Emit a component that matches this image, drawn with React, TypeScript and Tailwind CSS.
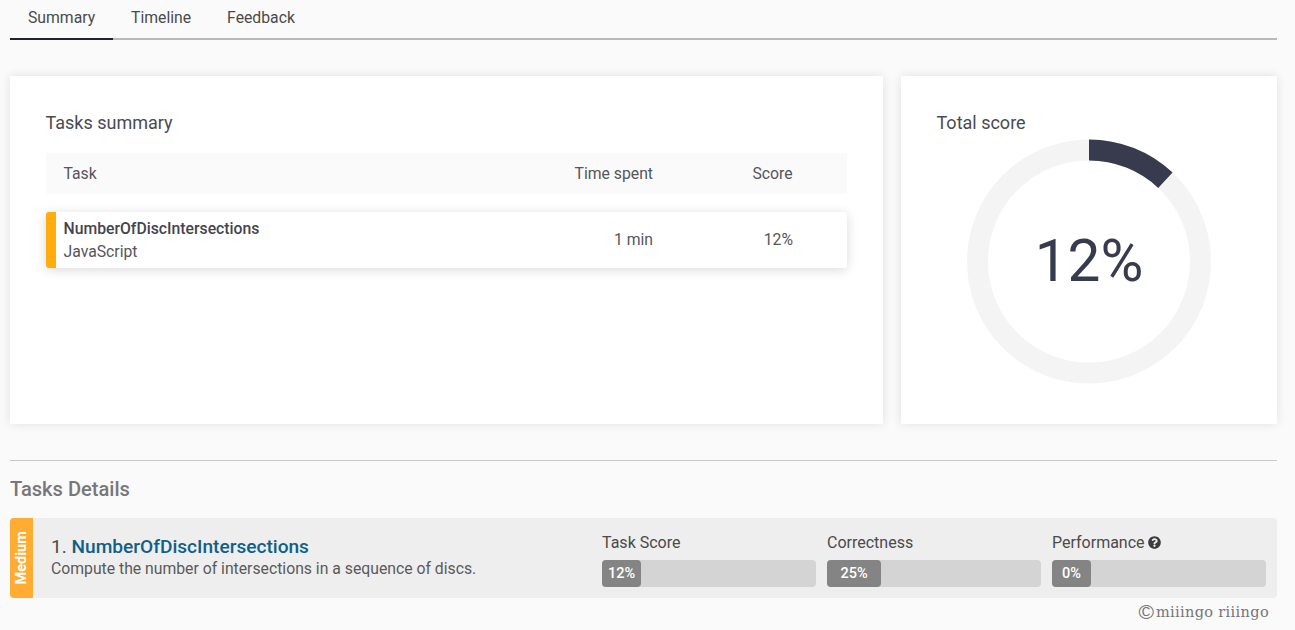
import React from "react";
import { FaQuestionCircle } from "react-icons/fa";

const font = { fontFamily: "Roboto, sans-serif" };

function ScoreRing({ value }: { value: number }) {
  const r = 111.5;
  const circumference = 2 * Math.PI * r;
  return (
    <svg width="244" height="245" viewBox="0 0 244 245" className="block">
      <circle cx="122" cy="122.5" r={r} fill="none" stroke="#f4f4f4" strokeWidth="21" />
      <circle
        cx="122"
        cy="122.5"
        r={r}
        fill="none"
        stroke="#373b4d"
        strokeWidth="21"
        strokeDasharray={`${circumference * value} ${circumference}`}
        transform="rotate(-90 122 122.5)"
      />
    </svg>
  );
}

function Meter({ label, value, fill, help }: { label: string; value: string; fill: number; help?: boolean }) {
  return (
    <div className="w-[214px] flex flex-col">
      <div className="h-[20px] pt-[1px] flex items-center gap-[3px] text-[16px] leading-[20px] text-[#4a4a4a]">
        {label}
        {help && <FaQuestionCircle className="w-[13px] h-[13px] text-[#3c3c3c]" />}
      </div>
      <div className="mt-[8px] h-[27px] rounded-[4px] bg-[#d4d4d4]">
        <div
          className="h-full rounded-[4px] bg-[#848484] flex items-center justify-center text-[14.5px] font-medium text-white"
          style={{ width: fill }}
        >
          {value}
        </div>
      </div>
    </div>
  );
}

export default function App() {
  return (
    <div className="h-[630px] overflow-hidden bg-[#fafafa] pl-[10px] pr-[18px]" style={font}>
      {/* Tabs */}
      <div className="h-[40px] flex border-b-2 border-[#b9b9b9] text-[15.75px] text-[#4a4a4a]">
        <div className="w-[103px] h-[40px] border-b-2 border-[#23232b] pt-[8px] pl-[18px] leading-[20px]">Summary</div>
        <div className="pt-[8px] pl-[18px] leading-[20px]">Timeline</div>
        <div className="pt-[8px] pl-[36px] leading-[20px]">Feedback</div>
      </div>

      <div className="mt-[36px] flex gap-[18px]">
        {/* Tasks summary */}
        <div className="w-[873px] h-[348px] bg-white shadow-[0_0_10px_rgba(0,0,0,0.1)] pt-[36px] px-[36px]">
          <h2 className="text-[18px] leading-[22px] text-[#4a4a50] -ml-[0.5px]">Tasks summary</h2>
          <div className="mt-[19px] h-[41px] bg-[#fafafa] flex items-center text-[15.75px] text-[#55555c]">
            <div className="flex-1 pl-[17.5px]">Task</div>
            <div className="w-[100px] text-right">Time spent</div>
            <div className="w-[194px] pr-[54.5px] text-right">Score</div>
          </div>
          <div className="mt-[18px] h-[56px] bg-white rounded-[3px] shadow-[0_2px_12px_rgba(0,0,0,0.15)] border-l-[10px] border-[#ffac0e] flex items-center text-[#55555c]">
            <div className="flex-1 pl-[7.5px]">
              <div className="text-[15.75px] leading-[23px] font-medium text-[#45454c]">NumberOfDiscIntersections</div>
              <div className="text-[15.75px] leading-[23px]">JavaScript</div>
            </div>
            <div className="w-[100px] text-right text-[15.75px]">1 min</div>
            <div className="w-[194px] pr-[54px] text-right text-[15.75px]">12%</div>
          </div>
        </div>

        {/* Total score */}
        <div className="w-[376px] h-[348px] bg-white shadow-[0_0_10px_rgba(0,0,0,0.1)] pt-[36px] px-[36px]">
          <h2 className="text-[18px] leading-[22px] text-[#4a4a50] -ml-[0.5px]">Total score</h2>
          <div className="mt-[5px] ml-[30px] w-[244px] relative">
            <ScoreRing value={0.12} />
            <div className="absolute inset-0 flex items-center justify-center text-[58.5px] text-[#373b4d]">12%</div>
          </div>
        </div>
      </div>

      <div className="mt-[36px] border-t border-[#c8c8c8]" />
      <h2 className="mt-[16px] text-[20.1px] leading-[24px] font-medium text-[#77777a]">Tasks Details</h2>

      {/* Task details row */}
      <div className="mt-[17px] h-[80px] rounded-[4px] bg-[#eeeeee] flex">
        <div className="w-[23px] rounded-l-[4px] bg-[#ffac33] flex items-center justify-center">
          <span className="-rotate-90 text-[14.5px] font-bold text-white">Medium</span>
        </div>
        <div className="w-[569px] pl-[18px] pt-[17px]">
          <div className="text-[19.1px] leading-[23px] text-[#4a4a4a]">
            1. <span className="font-medium text-[#0f6088]">NumberOfDiscIntersections</span>
          </div>
          <div className="text-[15.75px] leading-[21px] text-[#5a5a5a]">Compute the number of intersections in a sequence of discs.</div>
        </div>
        <div className="pt-[14px] flex gap-[11px]">
          <Meter label="Task Score" value="12%" fill={39} />
          <Meter label="Correctness" value="25%" fill={54} />
          <Meter label="Performance" value="0%" fill={39} help />
        </div>
      </div>

      {/* Watermark */}
      <div className="mt-[5px] pr-[8px] flex justify-end items-center gap-[2px] text-[#757575]">
        <span className="text-[21px] leading-[18px]" style={{ fontFamily: "'Liberation Sans', sans-serif" }}>©</span>
        <span className="text-[14.5px] leading-[18px] tracking-[0.35px]" style={{ fontFamily: "'DejaVu Serif', serif" }}>miiingo riiingo</span>
      </div>
    </div>
  );
}
